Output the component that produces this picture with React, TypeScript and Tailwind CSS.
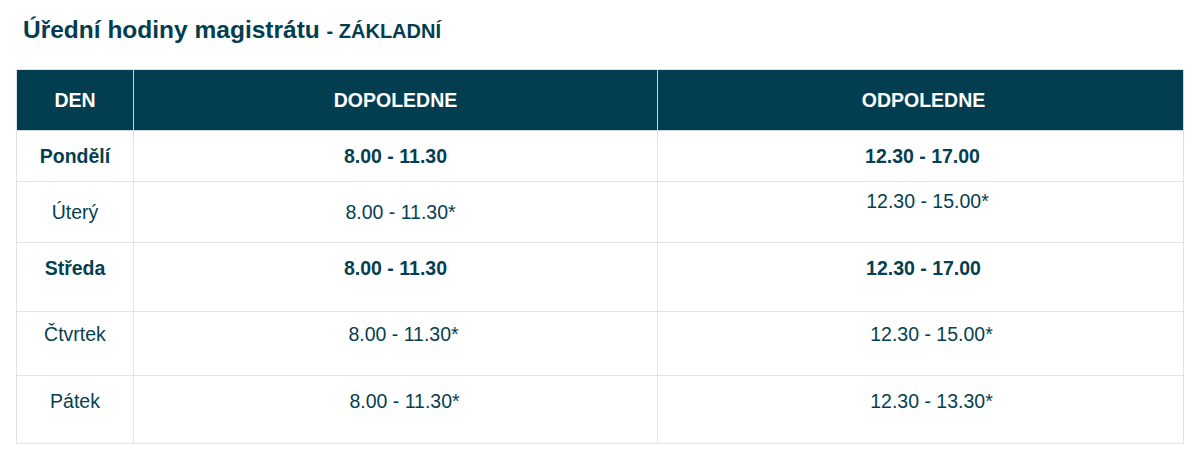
import React from "react";

const font = { fontFamily: '"Liberation Sans", Arial, sans-serif' };

export default function App() {
  return (
    <div className="w-[1200px] h-[457px] bg-white text-[#063f51]" style={font}>
      <div className="pt-[14px] pl-[23px] h-[69px]">
        <h2 className="font-bold text-[24.5px] leading-[32px] text-[#033d50]">
          Úřední hodiny magistrátu <span className="text-[20px]">- ZÁKLADNÍ</span>
        </h2>
      </div>
      <div className="ml-[16px] w-[1167px] border-l border-t border-[#dfe3e5]">
        <div className="grid grid-cols-[117px_524px_526px] h-[61px] bg-[#033e50] text-white font-bold text-[19.5px] leading-[22px]">
          <div className="flex items-center justify-center border-r border-b border-[#c9d8de]">DEN</div>
          <div className="flex items-center justify-center border-r border-b border-[#c9d8de]">DOPOLEDNE</div>
          <div className="flex items-center justify-center border-r border-b border-[#c9d8de] pl-[6px]">ODPOLEDNE</div>
        </div>
        <div className="grid grid-cols-[117px_524px_526px] h-[51px] text-[19.5px] leading-[22px] font-bold">
          <div className="flex items-center justify-center border-r border-b border-[#dfe3e5]">Pondělí</div>
          <div className="flex items-center justify-center border-r border-b border-[#dfe3e5]">8.00 - 11.30</div>
          <div className="flex items-center justify-center border-r border-b border-[#dfe3e5] pl-[4px]">12.30 - 17.00</div>
        </div>
        <div className="grid grid-cols-[117px_524px_526px] h-[61px] text-[19.5px] leading-[22px]">
          <div className="flex items-center justify-center border-r border-b border-[#dfe3e5]">Úterý</div>
          <div className="flex items-center justify-center border-r border-b border-[#dfe3e5] pl-[10px]">8.00 - 11.30*</div>
          <div className="flex justify-center border-r border-b border-[#dfe3e5] pt-[8px] pl-[14px]">12.30 - 15.00*</div>
        </div>
        <div className="grid grid-cols-[117px_524px_526px] h-[69px] text-[19.5px] leading-[22px] font-bold">
          <div className="flex justify-center border-r border-b border-[#dfe3e5] pt-[14px]">Středa</div>
          <div className="flex justify-center border-r border-b border-[#dfe3e5] pt-[14px]">8.00 - 11.30</div>
          <div className="flex justify-center border-r border-b border-[#dfe3e5] pt-[14px] pl-[6px]">12.30 - 17.00</div>
        </div>
        <div className="grid grid-cols-[117px_524px_526px] h-[64px] text-[19.5px] leading-[22px]">
          <div className="flex justify-center border-r border-b border-[#dfe3e5] pt-[11px]">Čtvrtek</div>
          <div className="flex justify-center border-r border-b border-[#dfe3e5] pt-[11px] pl-[16px]">8.00 - 11.30*</div>
          <div className="flex justify-center border-r border-b border-[#dfe3e5] pt-[11px] pl-[22px]">12.30 - 15.00*</div>
        </div>
        <div className="grid grid-cols-[117px_524px_526px] h-[68px] text-[19.5px] leading-[22px]">
          <div className="flex justify-center border-r border-b border-[#dfe3e5] pt-[14px]">Pátek</div>
          <div className="flex justify-center border-r border-b border-[#dfe3e5] pt-[14px] pl-[18px]">8.00 - 11.30*</div>
          <div className="flex justify-center border-r border-b border-[#dfe3e5] pt-[14px] pl-[22px]">12.30 - 13.30*</div>
        </div>
      </div>
    </div>
  );
}
